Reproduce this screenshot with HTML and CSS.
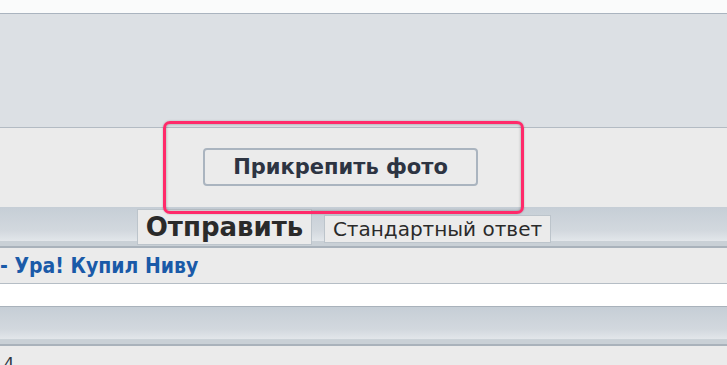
FILE: index.html
```html
<!DOCTYPE html>
<html lang="ru">
<head>
<meta charset="utf-8">
<link rel="stylesheet" href="styles.css">
</head>
<body>
<div class="page">
  <div class="top"></div>
  <div class="editor"></div>
  <div class="attach">
    <button class="attach-btn">Прикрепить фото</button>
  </div>
  <div class="bar submit-bar">
    <button class="send-btn">Отправить</button>
    <button class="std-btn">Стандартный ответ</button>
  </div>
  <div class="row link-row">
    <a class="topic-link" href="#">- Ура! Купил Ниву</a>
  </div>
  <div class="blank"></div>
  <div class="bar empty-bar"></div>
  <div class="row pages">4</div>
  <div class="highlight"></div>
</div>
</body>
</html>
```

FILE: styles.css
```css
* { box-sizing: border-box; }
html, body { margin: 0; padding: 0; }
body {
  width: 727px;
  height: 365px;
  overflow: hidden;
  background: #ebebeb;
  font-family: "DejaVu Sans", Verdana, sans-serif;
}
.page { position: relative; }
.top {
  height: 14px;
  background: #fafbfb;
  border-bottom: 1px solid #aab4bf;
}
.editor {
  height: 114px;
  background: #dce0e4;
  border-bottom: 1px solid #b3bbc3;
}
.attach {
  height: 79px;
  background: #ebebeb;
  display: flex;
  justify-content: flex-start;
  padding-top: 20px;
  padding-left: 203px;
}
.attach-btn {
  width: 275px;
  height: 38px;
  background: #ebebeb;
  border: 2px solid #aab4bf;
  border-radius: 4px;
  color: #2d3442;
  font-family: "DejaVu Sans", Verdana, sans-serif;
  font-weight: bold;
  font-size: 21px;
  padding: 0;
}
.bar {
  background: linear-gradient(#c6ced6 0%, #d2d8de 60%, #e2e6ea 86%, #c9d0d6 88%, #c9d0d6 100%);
  border-bottom: 2px solid #a9b2bb;
}
.submit-bar {
  height: 41px;
  display: flex;
  align-items: flex-start;
  padding-left: 137px;
  gap: 12px;
}
.send-btn {
  margin-top: 2px;
  width: 175px;
  height: 36px;
  background: #ebebeb;
  border: 1px solid #bcc4cb;
  font-family: "DejaVu Sans", Verdana, sans-serif;
  font-weight: bold;
  font-size: 26px;
  color: #2a2a2a;
  padding: 0;
}
.std-btn {
  margin-top: 8px;
  width: 227px;
  height: 28px;
  background: #ebebeb;
  border: 1px solid #bcc4cb;
  font-family: "DejaVu Sans", Verdana, sans-serif;
  font-size: 20px;
  color: #2a2a2a;
  padding: 0;
}
.row {
  background: #ebebeb;
}
.link-row {
  height: 36px;
  border-bottom: 1px solid #b5bdc5;
  display: flex;
  align-items: center;
  padding-left: 0;
}
.topic-link {
  color: #1a5aa8;
  font-weight: bold;
  font-size: 21px;
  text-decoration: none;
  font-family: "DejaVu Sans Condensed", "DejaVu Sans", sans-serif;
}
.blank {
  height: 23px;
  background: #ffffff;
  border-bottom: 1px solid #a9b2bb;
}
.empty-bar {
  height: 39px;
}
.pages {
  height: 30px;
  padding: 8px 0 0 4px;
  font-size: 16px;
  color: #2e3645;
}
.highlight {
  position: absolute;
  left: 163px;
  top: 121px;
  width: 361px;
  height: 93px;
  border: 3px solid #ff2a6a;
  border-radius: 7px;
  box-shadow: 0 0 2px rgba(0,0,0,0.25), inset 0 0 3px rgba(0,0,0,0.35);
}
```
